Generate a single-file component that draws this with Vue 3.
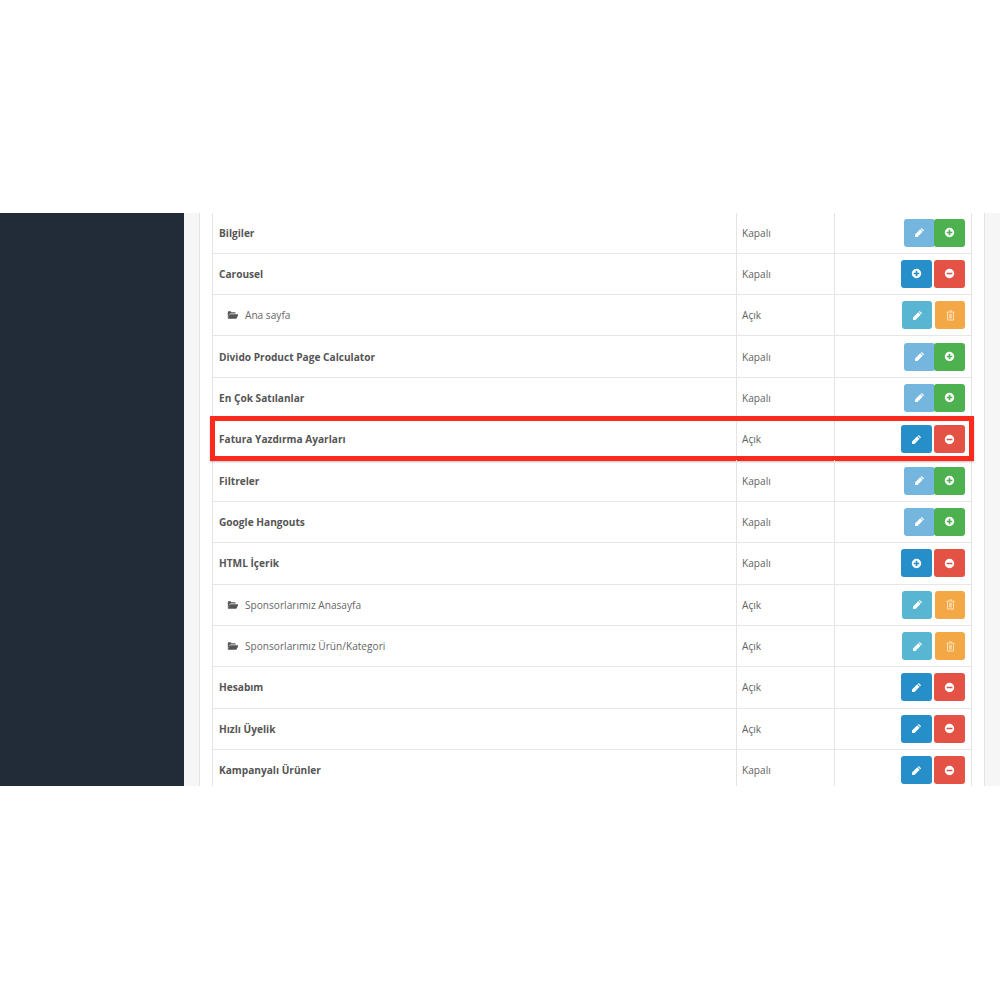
<script setup>
const rows = [
  { name: 'Bilgiler', status: 'Kapalı', a: ['sky', 'pencil'], b: ['green', 'plus'] },
  { name: 'Carousel', status: 'Kapalı', a: ['blue', 'plus'], b: ['red', 'minus'] },
  { name: 'Ana sayfa', sub: true, status: 'Açık', a: ['info', 'pencil'], b: ['amber', 'trash'] },
  { name: 'Divido Product Page Calculator', status: 'Kapalı', a: ['sky', 'pencil'], b: ['green', 'plus'] },
  { name: 'En Çok Satılanlar', status: 'Kapalı', a: ['sky', 'pencil'], b: ['green', 'plus'] },
  { name: 'Fatura Yazdırma Ayarları', status: 'Açık', a: ['blue', 'pencil'], b: ['red', 'minus'], marked: true },
  { name: 'Filtreler', status: 'Kapalı', a: ['sky', 'pencil'], b: ['green', 'plus'] },
  { name: 'Google Hangouts', status: 'Kapalı', a: ['sky', 'pencil'], b: ['green', 'plus'] },
  { name: 'HTML İçerik', status: 'Kapalı', a: ['blue', 'plus'], b: ['red', 'minus'] },
  { name: 'Sponsorlarımız Anasayfa', sub: true, status: 'Açık', a: ['info', 'pencil'], b: ['amber', 'trash'] },
  { name: 'Sponsorlarımız Ürün/Kategori', sub: true, status: 'Açık', a: ['info', 'pencil'], b: ['amber', 'trash'] },
  { name: 'Hesabım', status: 'Açık', a: ['blue', 'pencil'], b: ['red', 'minus'] },
  { name: 'Hızlı Üyelik', status: 'Açık', a: ['blue', 'pencil'], b: ['red', 'minus'] },
  { name: 'Kampanyalı Ürünler', status: 'Kapalı', a: ['blue', 'pencil'], b: ['red', 'minus'] },
]
const icons = {
  pencil: 'M9.3 2.1l2.6 2.6-.9.9-2.6-2.6zM7.8 3.6l2.6 2.6-5.6 5.6H2.2V9.2z',
  plus: 'M7 1.9a5.1 5.1 0 1 0 0 10.2A5.1 5.1 0 0 0 7 1.9zM6.1 4h1.8v2.1H10v1.8H7.9V10H6.1V7.9H4V6.1h2.1z',
  minus: 'M7 1.9a5.1 5.1 0 1 0 0 10.2A5.1 5.1 0 0 0 7 1.9zM3.9 6.1h6.2v1.8H3.9z',
  trash: 'M5.5 1.6h3l.6 1.3h2.4v1h-.8v7.4c0 .6-.4 1-1 1H4.3c-.6 0-1-.4-1-1V3.9h-.8v-1h2.4zM6 2.9h2l-.2-.4H6.2zM4.3 3.9v7.4h5.4V3.9zM5.3 5.1h.8v5h-.8zM6.6 5.1h.8v5h-.8zM7.9 5.1h.8v5h-.8z',
}
</script>

<template>
  <div class="page">
    <div class="shot">
      <aside class="side"></aside>
      <main class="gutter">
        <div class="panel">
          <div class="list">
            <div v-for="row in rows" :key="row.name" class="row">
              <div class="cell name" :class="{ sub: row.sub }">
                <svg v-if="row.sub" class="folder" viewBox="0 0 14 12" aria-hidden="true">
                  <path d="M1 10V2.2c0-.5.4-.9.9-.9h2.5l1 1.2h4.2c.5 0 .9.4.9.9v.9H4.2c-.5 0-.9.2-1.2.7z" />
                  <path d="M3.9 5.2h9.3c.5 0 .7.4.5.8l-2 4c-.2.4-.6.7-1.1.7H1.6c-.5 0-.7-.4-.5-.8l1.7-4c.2-.4.6-.7 1.1-.7z" />
                </svg>
                <span>{{ row.name }}</span>
              </div>
              <div class="cell status">{{ row.status }}</div>
              <div class="cell actions">
                <span class="btn" :class="[row.a[0], 'first']">
                  <svg viewBox="0 0 14 14" aria-hidden="true"><path fill-rule="evenodd" :d="icons[row.a[1]]" /></svg>
                </span>
                <span class="btn" :class="[row.b[0], 'second']">
                  <svg viewBox="0 0 14 14" aria-hidden="true"><path fill-rule="evenodd" :d="icons[row.b[1]]" /></svg>
                </span>
              </div>
              <div v-if="row.marked" class="mark"></div>
            </div>
          </div>
        </div>
      </main>
    </div>
  </div>
</template>

<style>
html, body { margin: 0; background: #fff; }
</style>

<style scoped>
.page {
  height: 1000px;
  padding-top: 213px;
  box-sizing: border-box;
  background: #fff;
  font-family: "Open Sans", sans-serif;
}
.shot {
  display: flex;
  height: 573px;
  overflow: hidden;
}
.side {
  flex: 0 0 184px;
  background: #222b38;
}
.gutter {
  flex: 1;
  display: flex;
  background: #f6f6f6;
  padding: 0 15px 0 15px;
}
.panel {
  flex: 1;
  background: #fff;
  border-left: 1px solid #e4e4e4;
  border-right: 1px solid #e4e4e4;
  padding: 0 12px;
}
.list {
  margin-top: -0.6px;
  border-left: 1px solid #e4e4e4;
  border-right: 1px solid #e4e4e4;
}
.row {
  position: relative;
  display: grid;
  grid-template-columns: 523px 98px 1fr;
  height: 41.35px;
  box-sizing: border-box;
  border-bottom: 1px solid #e6e6e6;
}
.cell {
  display: flex;
  align-items: center;
  font-size: 10.15px;
  color: #626262;
  padding: 0 6px;
}
.status { border-left: 1px solid #e4e4e4; padding-left: 5px; }
.name {
  font-weight: 700;
  color: #555;
}
.name.sub {
  font-weight: 400;
  color: #666;
  padding-left: 13.5px;
  gap: 7px;
}
.folder { width: 11.5px; height: 10px; fill: #555; }
.actions {
  border-left: 1px solid #e4e4e4;
  justify-content: flex-end;
  padding: 0 6px 0 0;
}
.btn {
  display: flex;
  align-items: center;
  justify-content: center;
  box-sizing: border-box;
  width: 31px;
  height: 28px;
  border-radius: 3px;
}
.btn svg { width: 13px; height: 13px; fill: #fff; }
.second { margin-left: 2px; }
.sky { background: #75b6df; margin-right: -3px; }
.green { background: #4eb14f; }
.blue { background: #268fca; }
.red { background: #e35244; }
.info { background: #58b6d2; width: 30px; margin-right: 1px; }
.amber { background: #f3a845; width: 30px; }
.amber svg { fill: #fde3bf; }
.mark {
  position: absolute;
  left: -3px;
  right: -3px;
  top: -3px;
  bottom: -2px;
  border: 5px solid #fb2a1c;
  box-shadow: 0 1px 2px rgba(0, 0, 0, .25);
  pointer-events: none;
}
</style>
